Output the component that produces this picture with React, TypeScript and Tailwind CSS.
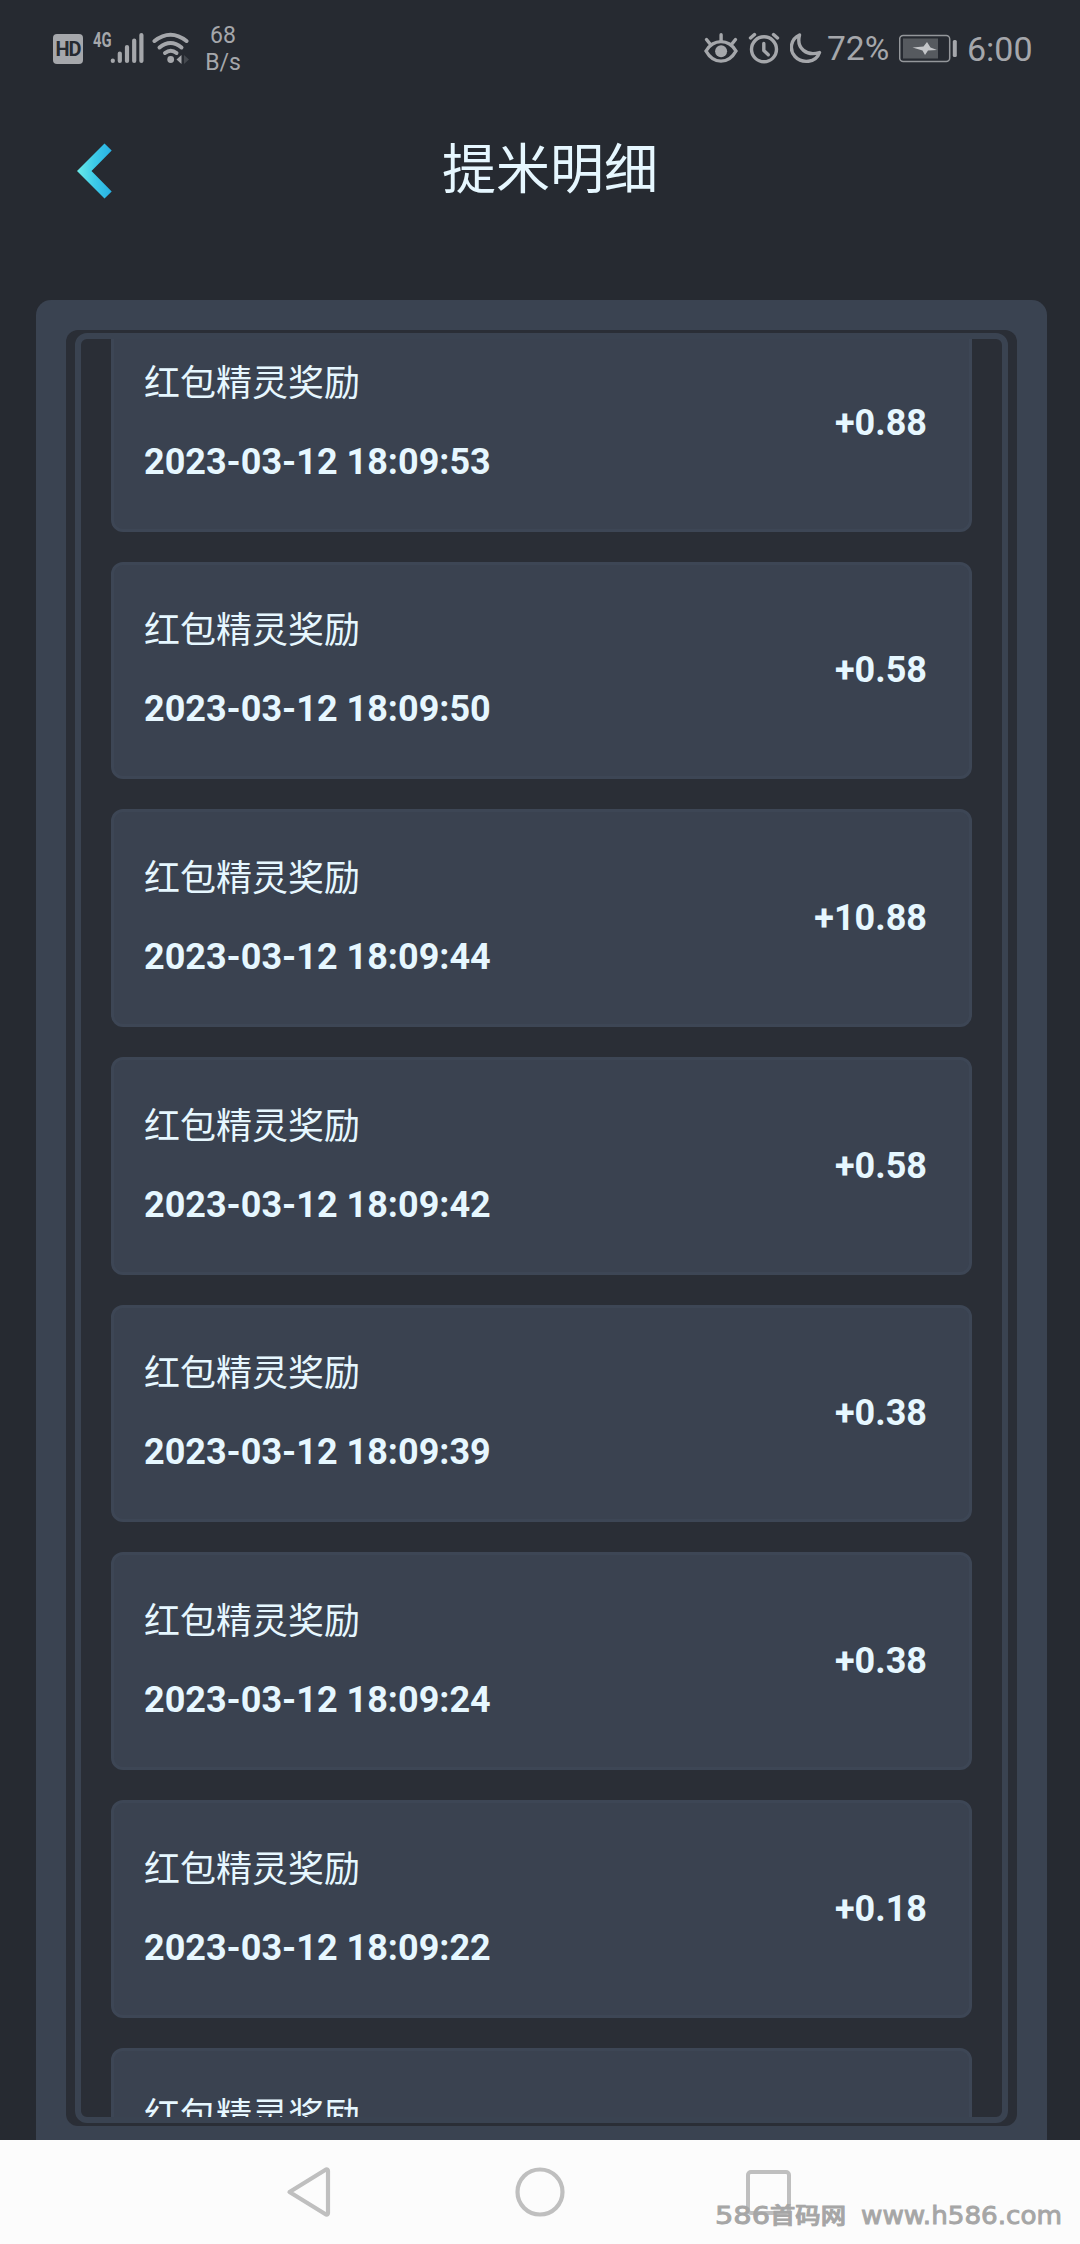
type RewardRecord = {
  title: string;
  time: string;
  amount: string;
};

const records: RewardRecord[] = [
  { title: "红包精灵奖励", time: "2023-03-12 18:09:53", amount: "+0.88" },
  { title: "红包精灵奖励", time: "2023-03-12 18:09:50", amount: "+0.58" },
  { title: "红包精灵奖励", time: "2023-03-12 18:09:44", amount: "+10.88" },
  { title: "红包精灵奖励", time: "2023-03-12 18:09:42", amount: "+0.58" },
  { title: "红包精灵奖励", time: "2023-03-12 18:09:39", amount: "+0.38" },
  { title: "红包精灵奖励", time: "2023-03-12 18:09:24", amount: "+0.38" },
  { title: "红包精灵奖励", time: "2023-03-12 18:09:22", amount: "+0.18" },
  { title: "红包精灵奖励", time: "", amount: "" },
];

function SignalIcon() {
  return (
    <svg
      className="w-[34px] h-8 mt-8"
      viewBox="110 32 34 32"
      stroke="currentColor"
      strokeWidth="4.2"
      strokeLinecap="round"
    >
      <path d="M112.800 60.5v.5M119.800 53.500v7.500M127 47V61M134.200 40.500v20.500M141.400 35v26" />
    </svg>
  );
}

function WifiIcon() {
  return (
    <svg className="w-10 h-8 mt-8 ml-2" viewBox="152 32 40 32" fill="none">
      <g stroke="currentColor" strokeWidth="4" strokeLinecap="round">
        <path d="M154.500 41Q170.500 28.500 186.500 41" />
        <path d="M159.500 47.500Q170.500 38.500 181.500 47.500" />
        <path d="M165 53Q170.800 48.500 176.500 53" />
      </g>
      <circle cx="170.700" cy="59.500" r="3.400" fill="currentColor" />
      <path d="M176.500 59.500l5-4.500v9z" fill="currentColor" />
      <path d="M189 59.500l-5-4.500v9z" fill="#44484e" />
    </svg>
  );
}

function EyeIcon() {
  return (
    <svg
      className="w-[34px] h-8 mt-8"
      viewBox="703.5 32 34 32"
      fill="none"
      stroke="currentColor"
      strokeWidth="3.4"
      strokeLinecap="round"
    >
      <path d="M705.500 51C713 38.500 728 38.500 735.500 51C728 64.500 713 64.500 705.500 51Z" />
      <path d="M720.600 34.800v6M706 39.500l3.600 4.500M735 39.500l-3.600 4.500" />
      <circle cx="720.600" cy="51.300" r="6" fill="currentColor" stroke="none" />
    </svg>
  );
}

function AlarmIcon() {
  return (
    <svg
      className="w-8 h-8 mt-8 ml-[10px]"
      viewBox="748 32 32 32"
      fill="none"
      stroke="currentColor"
      strokeWidth="3.4"
      strokeLinecap="round"
    >
      <circle cx="764" cy="49.300" r="12.500" />
      <path d="M763.800 43.500v7l4.500 4.300" strokeLinejoin="round" />
      <path d="M750.500 38l4-3.500M777.500 38l-4-3.500" />
    </svg>
  );
}

function MoonIcon() {
  return (
    <svg
      className="w-8 h-8 mt-8 ml-[10px]"
      viewBox="790 32 32 32"
      fill="none"
      stroke="currentColor"
      strokeWidth="3.4"
      strokeLinejoin="round"
    >
      <path d="M799.500 35C790.500 39 789 50 795 56.500C802 64 816 63 819.500 52.500C807 56.500 796 48.500 799.500 35Z" />
    </svg>
  );
}

function BatteryIcon() {
  return (
    <svg className="w-[58px] h-8 mt-8 ml-[10px]" viewBox="899 32 58 32" fill="none">
      <rect x="899.700" y="35.500" width="50" height="26" rx="3.500" stroke="#94979b" strokeWidth="1.500" />
      <rect x="903" y="38.500" width="35" height="20" fill="#565a5f" />
      <rect x="952.800" y="40" width="4" height="17" rx="1.500" fill="currentColor" />
      <path d="M912.500 47.500L923.500 46.500L927 42L930.500 47.500L937 50L928 50.500L925 55L922.500 50.500Z" fill="#c3c5c8" />
    </svg>
  );
}

function StatusBar() {
  return (
    <div className="flex h-[99px] text-[#a5a7ab] font-['Roboto',sans-serif]">
      <div className="flex items-center justify-center w-[30px] h-[30px] mt-[34px] ml-[53px] rounded-[4px] bg-[#a5a7ab] text-[#262a31] text-[20px] leading-none font-bold tracking-[-1px]">
        <span>HD</span>
      </div>
      <span className="mt-[30px] ml-[10px] w-[17px] text-[20px] leading-5 font-bold origin-left scale-x-[0.74]">
        4G
      </span>
      <SignalIcon />
      <WifiIcon />
      <div className="w-[60px] mt-[22px] ml-px text-center text-[23px] leading-[27px]">
        <p>68</p>
        <p>B/s</p>
      </div>
      <div className="flex ml-auto mr-12">
        <EyeIcon />
        <AlarmIcon />
        <MoonIcon />
        <span className="mt-[29px] ml-[5px] w-[62px] text-[33.500px] leading-10 whitespace-nowrap">
          72%
        </span>
        <BatteryIcon />
        <span className="mt-[29px] ml-[10px] w-[65px] text-[34px] leading-10 whitespace-nowrap">
          6:00
        </span>
      </div>
    </div>
  );
}

function Header() {
  return (
    <header className="flex items-center h-[144px] pl-[76px]">
      <button type="button" aria-label="返回" className="w-9 h-14">
        <svg className="w-9 h-14" viewBox="76 143 36 56">
          <defs>
            <linearGradient id="arrow" x1="0" x2="1" y1="0" y2="0">
              <stop offset="0" stopColor="#6cebe8" />
              <stop offset="0.5" stopColor="#3dcbe8" />
              <stop offset="1" stopColor="#27b0e4" />
            </linearGradient>
          </defs>
          <path d="M77 171L104.500 143.500L111.700 150.500L91.500 171L111.700 191.500L104.500 198.500Z" fill="url(#arrow)" />
        </svg>
      </button>
      <h1 className="ml-[330px] text-[54px] leading-[72px] text-[#e6f7ff]">提米明细</h1>
    </header>
  );
}

function RecordCard({ record }: { record: RewardRecord }) {
  return (
    <li className="flex items-center justify-between shrink-0 h-[217.67px] pl-[30px] pr-[42px] border-3 border-[#3d4655] rounded-xl bg-[#3a4250] text-[36px] text-[#e6f7ff]">
      <div className="flex flex-col gap-6 pb-[0.33px]">
        <p className="h-[54px] leading-[54px]">{record.title}</p>
        <p className="h-[54px] leading-[54px] font-bold">{record.time}</p>
      </div>
      <p className="pb-[0.33px] font-bold">{record.amount}</p>
    </li>
  );
}

function NavBar() {
  return (
    <nav className="relative h-[104px] bg-[#fcfcfc]">
      <div className="flex items-center h-full pl-[284px] text-[#bfbfbf]">
        <svg className="w-12 h-[54px]" viewBox="284 2165 48 54" fill="none" stroke="currentColor" strokeWidth="4.200" strokeLinejoin="round">
          <path d="M289.500 2192L326 2169.500Q328 2169 328 2171V2213Q328 2215 326 2214.500Z" />
        </svg>
        <svg className="w-[52px] h-[52px] ml-[182px]" viewBox="0 0 52 52" fill="none" stroke="currentColor" strokeWidth="4.200">
          <circle cx="26" cy="26" r="22.500" />
        </svg>
        <div className="w-[45px] h-[45px] ml-[180px] border-4 border-current rounded-[5px]" />
      </div>
      {/* site mark over the bar */}
      <svg
        className="absolute left-[706px] bottom-1 w-[370px] h-11 overflow-visible font-['DejaVu_Sans','Noto_Sans_CJK_SC',sans-serif]"
        viewBox="706 2196 370 44"
        fill="#a6a6a6"
        stroke="#a6a6a6"
        strokeWidth="0.9"
      >
        <text x="715" y="2224" fontSize="24" textLength="55" lengthAdjust="spacingAndGlyphs">586</text>
        <text x="770" y="2222.500" fontSize="22" textLength="76" lengthAdjust="spacingAndGlyphs" fontWeight="500">首码网</text>
        <text x="861" y="2224" fontSize="24" textLength="201" lengthAdjust="spacingAndGlyphs">www.h586.com</text>
      </svg>
    </nav>
  );
}

export default function App() {
  return (
    <div className="flex flex-col w-[1080px] h-[2244px] overflow-hidden bg-[#262a31] font-['Roboto','Noto_Sans_CJK_SC',sans-serif]">
      <StatusBar />
      <Header />
      <main className="flex flex-col flex-1 min-h-0 mt-[57px] ml-9 mr-[33px] px-[30px] pt-[30px] pb-[14px] rounded-t-[15px] bg-[#3a4351]">
        <div className="flex flex-1 min-h-0 px-[9px] py-[3px] rounded-xl bg-[#2a2e36]">
          <div className="flex-1 min-h-0 overflow-hidden border-6 border-[#3a4351] rounded-xl">
            <ul className="flex flex-col gap-[30px] px-[30px] -mt-[25px]">
              {records.map((record, index) => (
                <RecordCard key={index} record={record} />
              ))}
            </ul>
          </div>
        </div>
      </main>
      <NavBar />
    </div>
  );
}
